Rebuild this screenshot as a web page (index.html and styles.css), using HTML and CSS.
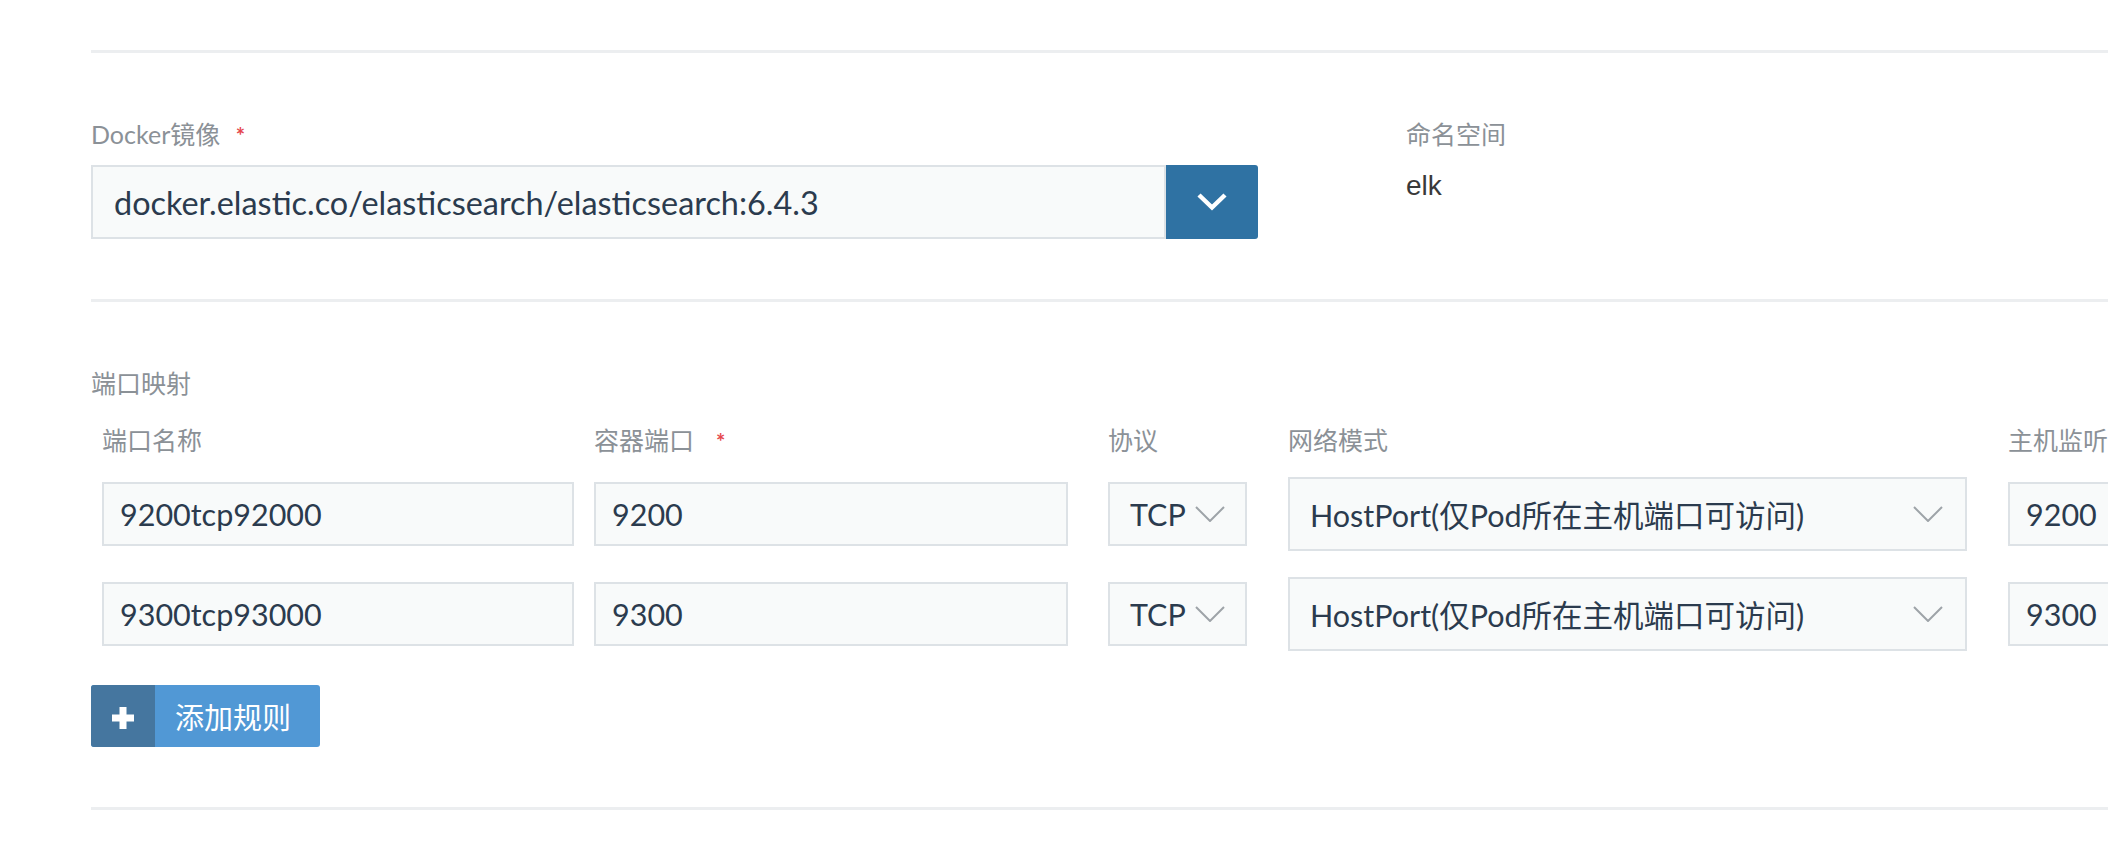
FILE: index.html
```html
<!DOCTYPE html>
<html lang="zh-CN">
<head>
<meta charset="utf-8">
<title>Port mapping</title>
<link rel="stylesheet" href="styles.css">
</head>
<body>
<div class="page">
  <div class="divider"></div>

  <section class="sec sec-image">
    <div class="field field-image">
      <div class="lbl">Docker镜像 <span class="req req-img">*</span></div>
      <div class="input-group">
        <div class="input input-image">docker.elastic.co/elasticsearch/elasticsearch:6.4.3</div>
        <div class="btn-drop">
          <svg width="32" height="20" viewBox="0 0 32 20"><polyline points="3,3 16,15.5 29,3" fill="none" stroke="#ffffff" stroke-width="4.5"/></svg>
        </div>
      </div>
    </div>
    <div class="field field-ns">
      <div class="lbl">命名空间</div>
      <div class="ns-value">elk</div>
    </div>
  </section>

  <div class="divider"></div>

  <section class="sec sec-ports">
    <div class="lbl">端口映射</div>
    <div class="port-grid">
      <div class="lbl head">端口名称</div>
      <div class="lbl head">容器端口<span class="req req-gap">*</span></div>
      <div class="lbl head">协议</div>
      <div class="lbl head">网络模式</div>
      <div class="lbl head">主机监听</div>

      <div class="cell"><div class="input w-name">9200tcp92000</div></div>
      <div class="cell"><div class="input w-port">9200</div></div>
      <div class="cell"><div class="input select-sm">TCP <svg class="chev" width="30" height="16" viewBox="0 0 30 16"><polyline points="1,1 15,15 29,1" fill="none" stroke="#9ea3a8" stroke-width="2"/></svg></div></div>
      <div class="cell"><div class="input select-lg"><span>HostPort(仅Pod所在主机端口可访问)</span><svg class="chev" width="30" height="16" viewBox="0 0 30 16"><polyline points="1,1 15,15 29,1" fill="none" stroke="#9ea3a8" stroke-width="2"/></svg></div></div>
      <div class="cell"><div class="input w-host">9200</div></div>

      <div class="cell"><div class="input w-name">9300tcp93000</div></div>
      <div class="cell"><div class="input w-port">9300</div></div>
      <div class="cell"><div class="input select-sm">TCP <svg class="chev" width="30" height="16" viewBox="0 0 30 16"><polyline points="1,1 15,15 29,1" fill="none" stroke="#9ea3a8" stroke-width="2"/></svg></div></div>
      <div class="cell"><div class="input select-lg"><span>HostPort(仅Pod所在主机端口可访问)</span><svg class="chev" width="30" height="16" viewBox="0 0 30 16"><polyline points="1,1 15,15 29,1" fill="none" stroke="#9ea3a8" stroke-width="2"/></svg></div></div>
      <div class="cell"><div class="input w-host">9300</div></div>
    </div>

    <div class="btn-add">
      <span class="add-icon"><svg width="24" height="24" viewBox="0 0 24 24"><rect x="8.5" y="1" width="7" height="22" fill="#ffffff"/><rect x="1" y="8.5" width="22" height="7" fill="#ffffff"/></svg></span>
      <span class="add-text">添加规则</span>
    </div>
  </section>

  <div class="divider"></div>
</div>
</body>
</html>
```
FILE: styles.css
```css
html, body {
  margin: 0;
  padding: 0;
  background: #ffffff;
}
body {
  width: 2108px;
  height: 866px;
  overflow: hidden;
  font-family: "Lato", "Noto Sans CJK SC", sans-serif;
}
.page {
  padding: 50px 0 0 91px;
  width: 2300px;
}
.divider {
  height: 3px;
  background: #eceef0;
}
.lbl {
  font-size: 25px;
  line-height: 32px;
  color: #8b9197;
  white-space: nowrap;
}
.req {
  color: #e5484d;
  font-weight: 700;
  font-size: 22px;
  margin-left: 3px;
}
.req-img {
  margin-left: 9px;
}
.req-gap {
  margin-left: 22px;
}

/* section 1 */
.sec-image {
  display: flex;
  padding: 65px 0 60px 0;
}
.field-image {
  width: 1315px;
}
.input-group {
  display: flex;
  margin-top: 13px;
  height: 74px;
}
.input {
  box-sizing: border-box;
  border: 2px solid #dde2e6;
  background: #f8fafa;
  color: #2b3b4e;
  display: flex;
  align-items: center;
  white-space: nowrap;
  overflow: hidden;
}
.input-image {
  width: 1075px;
  height: 74px;
  padding-left: 21px;
  font-size: 32.4px;
}
.btn-drop {
  width: 92px;
  height: 74px;
  background: #2f72a3;
  border-radius: 0 3px 3px 0;
  display: flex;
  align-items: center;
  justify-content: center;
}
.ns-value {
  margin-top: 19px;
  font-family: "Liberation Sans", "Noto Sans CJK SC", sans-serif;
  font-size: 28px;
  line-height: 34px;
  color: #393939;
}

/* section 2 */
.sec-ports {
  padding: 65px 0 60px 0;
}
.port-grid {
  display: grid;
  grid-template-columns: 492px 514px 180px 720px 300px;
  grid-auto-rows: auto;
  row-gap: 26px;
  margin-top: 25px;
  margin-left: 11px;
}
.head {
  margin-bottom: -7px;
}
.cell {
  height: 74px;
  display: flex;
  align-items: center;
}
.cell .input {
  height: 64px;
  font-size: 30.5px;
  padding-left: 16px;
}
.w-name { width: 472px; }
.w-port { width: 474px; }
.w-host { width: 300px; }
.cell .select-sm {
  width: 139px;
  padding-left: 20px;
}
.select-sm .chev {
  margin-left: 9px;
}
.cell .select-lg {
  width: 679px;
  height: 74px;
  padding: 0 22px 0 20px;
  justify-content: space-between;
}

/* add button */
.btn-add {
  display: inline-flex;
  margin-top: 34px;
  height: 62px;
  border-radius: 3px;
  overflow: hidden;
  background: #5198d5;
  color: #ffffff;
}
.add-icon {
  width: 64px;
  background: #45769f;
  display: flex;
  align-items: center;
  justify-content: center;
  padding-top: 4px;
  box-sizing: border-box;
}
.add-text {
  display: flex;
  align-items: center;
  padding: 0 29px 0 20px;
  font-size: 29px;
}
```
